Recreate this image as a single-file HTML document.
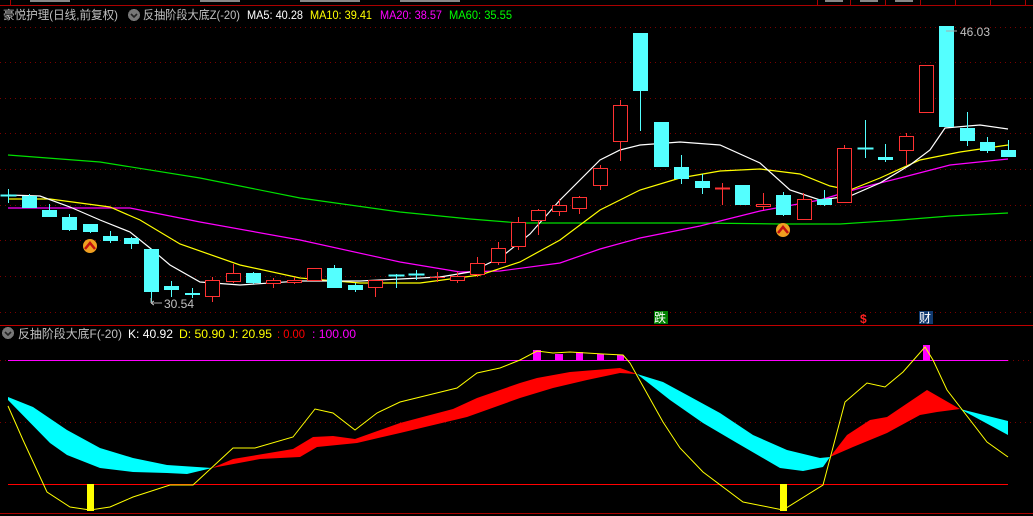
<!DOCTYPE html>
<html><head><meta charset="utf-8"><style>
html,body{margin:0;padding:0;background:#000;width:1033px;height:516px;overflow:hidden}
svg{display:block}
text{font-family:"Liberation Sans","Noto Sans CJK SC",sans-serif;font-size:12px}
</style></head><body>
<svg width="1033" height="516" viewBox="0 0 1033 516" xmlns="http://www.w3.org/2000/svg" shape-rendering="crispEdges">
<rect width="1033" height="516" fill="#000"/>
<!-- top strip -->
<line x1="0" y1="5.5" x2="1033" y2="5.5" stroke="#a00" />
<g stroke="#a00"><line x1="10.5" y1="0" x2="10.5" y2="5"/><line x1="817.5" y1="0" x2="817.5" y2="5"/><line x1="850.5" y1="0" x2="850.5" y2="5"/><line x1="885.5" y1="0" x2="885.5" y2="5"/><line x1="920.5" y1="0" x2="920.5" y2="5"/><line x1="955.5" y1="0" x2="955.5" y2="5"/><line x1="990.5" y1="0" x2="990.5" y2="5"/><line x1="1025.5" y1="0" x2="1025.5" y2="5"/></g>
<g fill="#888"><rect x="30" y="0" width="40" height="2"/><rect x="200" y="0" width="40" height="2"/><rect x="300" y="0" width="60" height="2"/><rect x="400" y="0" width="60" height="2"/><rect x="825" y="0" width="18" height="2"/><rect x="860" y="0" width="18" height="2"/><rect x="895" y="0" width="18" height="2"/></g>
<!-- grid -->
<g stroke="#7a0000" stroke-dasharray="1,4">
<line x1="0" y1="27.5" x2="1033" y2="27.5"/><line x1="0" y1="62.5" x2="1033" y2="62.5"/><line x1="0" y1="98.5" x2="1033" y2="98.5"/><line x1="0" y1="133.5" x2="1033" y2="133.5"/><line x1="0" y1="169.5" x2="1033" y2="169.5"/><line x1="0" y1="205.5" x2="1033" y2="205.5"/><line x1="0" y1="240.5" x2="1033" y2="240.5"/><line x1="0" y1="276.5" x2="1033" y2="276.5"/><line x1="0" y1="312.5" x2="1033" y2="312.5"/>
<line x1="0" y1="422.5" x2="1033" y2="422.5"/><line x1="0" y1="360.5" x2="8" y2="360.5"/>
</g>
<line x1="0" y1="325.5" x2="1033" y2="325.5" stroke="#c00000"/>
<line x1="0" y1="513.5" x2="1033" y2="513.5" stroke="#a00"/>
<!-- header text -->
<text x="3" y="19" fill="#c0c0c0" textLength="115" lengthAdjust="spacingAndGlyphs">豪悦护理(日线,前复权)</text>
<circle cx="134" cy="15" r="6" fill="#777"/><path d="M131 14 L134 17 L137 14" stroke="#222" stroke-width="1.6" fill="none" shape-rendering="auto"/>
<text x="143" y="19" fill="#c0c0c0" textLength="97" lengthAdjust="spacingAndGlyphs">反抽阶段大底Z(-20)</text>
<text x="247" y="19" fill="#fff" textLength="56" lengthAdjust="spacingAndGlyphs">MA5: 40.28</text>
<text x="310" y="19" fill="#ff0" textLength="62" lengthAdjust="spacingAndGlyphs">MA10: 39.41</text>
<text x="380" y="19" fill="#f0f" textLength="62" lengthAdjust="spacingAndGlyphs">MA20: 38.57</text>
<text x="449" y="19" fill="#0f0" textLength="63" lengthAdjust="spacingAndGlyphs">MA60: 35.55</text>
<!-- MAs -->
<g fill="none" shape-rendering="auto" stroke-width="1.2">
<polyline stroke="#00e000" points="8,155 100,162 200,178 300,198 400,212 470,219 520,223 600,223 700,223 780,224 840,224 900,220 950,216 1008,213"/>
<polyline stroke="#f0f" points="8,208 130,208 200,222 300,240 400,262 460,272 500,271 560,263 600,249 640,238 700,226 760,211 820,200 860,188 900,178 950,165 1008,159"/>
<polyline stroke="#ff0" points="8,199 50,199 110,207 140,220 180,244 240,265 300,278 360,283 420,283 480,275 520,262 560,240 600,210 640,190 680,178 720,171 760,169 800,174 830,186 850,190 880,178 920,160 960,152 1008,145"/>
<polyline stroke="#fff" points="8,195 40,196 70,207 100,220 130,232 150,248 170,265 200,282 240,285 300,281 360,281 400,279 440,277 470,272 500,258 530,234 560,200 600,160 620,150 640,145 680,142 720,145 760,163 790,190 820,200 850,196 880,183 910,165 930,150 945,128 980,125 1008,129"/>
</g>
<!-- cyan candles -->
<g stroke="#54ffff" fill="#54ffff">
<line x1="8.5" y1="189" x2="8.5" y2="203"/><rect x="1" y="195" width="15" height="1"/>
<line x1="29.5" y1="194" x2="29.5" y2="208"/><rect x="22.5" y="196.5" width="14" height="11"/>
<line x1="49.5" y1="204" x2="49.5" y2="217"/><rect x="42.5" y="210.5" width="14" height="6"/>
<line x1="69.5" y1="214" x2="69.5" y2="231"/><rect x="62.5" y="217.5" width="14" height="12"/>
<line x1="90.5" y1="224" x2="90.5" y2="233"/><rect x="83.5" y="224.5" width="14" height="7"/>
<line x1="110.5" y1="231" x2="110.5" y2="243"/><rect x="103.5" y="236.5" width="14" height="4"/>
<line x1="131.5" y1="237" x2="131.5" y2="249"/><rect x="124.5" y="238.5" width="14" height="5"/>
<line x1="151.5" y1="249" x2="151.5" y2="303"/><rect x="144.5" y="249.5" width="14" height="42"/>
<line x1="171.5" y1="281" x2="171.5" y2="297"/><rect x="164.5" y="286.5" width="14" height="3"/>
<line x1="192.5" y1="288" x2="192.5" y2="298"/><rect x="185.5" y="293.5" width="14" height="1"/>
<line x1="253.5" y1="272" x2="253.5" y2="284"/><rect x="246.5" y="273.5" width="14" height="9"/>
<line x1="334.5" y1="265" x2="334.5" y2="288"/><rect x="327.5" y="268.5" width="14" height="19"/>
<line x1="355.5" y1="283" x2="355.5" y2="292"/><rect x="348.5" y="285.5" width="14" height="4"/>
<line x1="396.5" y1="274" x2="396.5" y2="288"/><rect x="389" y="275" width="15" height="1"/>
<line x1="416.5" y1="270" x2="416.5" y2="280"/><rect x="409" y="274" width="15" height="1"/>
<line x1="640.5" y1="33" x2="640.5" y2="131"/><rect x="633.5" y="33.5" width="14" height="57"/>
<rect x="654.5" y="122.5" width="14" height="44"/>
<line x1="681.5" y1="155" x2="681.5" y2="184"/><rect x="674.5" y="167.5" width="14" height="11"/>
<line x1="702.5" y1="174" x2="702.5" y2="194"/><rect x="695.5" y="181.5" width="14" height="6"/>
<rect x="735.5" y="185.5" width="14" height="19"/>
<line x1="783.5" y1="192" x2="783.5" y2="216"/><rect x="776.5" y="195.5" width="14" height="19"/>
<line x1="824.5" y1="190" x2="824.5" y2="206"/><rect x="817.5" y="199.5" width="14" height="5"/>
<line x1="865.5" y1="120" x2="865.5" y2="158"/><rect x="858" y="148" width="15" height="1"/>
<line x1="885.5" y1="144" x2="885.5" y2="162"/><rect x="878.5" y="157.5" width="14" height="2"/>
<rect x="939.5" y="26.5" width="14" height="100"/>
<line x1="967.5" y1="112" x2="967.5" y2="146"/><rect x="960.5" y="128.5" width="14" height="12"/>
<line x1="987.5" y1="137" x2="987.5" y2="153"/><rect x="980.5" y="142.5" width="14" height="8"/>
<line x1="1008.5" y1="140" x2="1008.5" y2="157"/><rect x="1001.5" y="150.5" width="14" height="6"/>
</g>
<!-- red candles -->
<g stroke="#ff3232" fill="#000">
<line x1="212.5" y1="277" x2="212.5" y2="302"/><rect x="205.5" y="280.5" width="14" height="16"/>
<line x1="233.5" y1="264" x2="233.5" y2="283"/><rect x="226.5" y="273.5" width="14" height="8"/>
<line x1="273.5" y1="278" x2="273.5" y2="288"/><rect x="266.5" y="280.5" width="14" height="3"/>
<line x1="294.5" y1="277" x2="294.5" y2="284"/><rect x="287.5" y="280.5" width="14" height="2"/>
<rect x="307.5" y="268.5" width="14" height="12"/>
<line x1="375.5" y1="280" x2="375.5" y2="297"/><rect x="368.5" y="280.5" width="14" height="7"/>
<line x1="437.5" y1="272" x2="437.5" y2="282"/><line x1="430" y1="277.5" x2="445" y2="277.5"/>
<line x1="457.5" y1="272" x2="457.5" y2="283"/><rect x="450.5" y="276.5" width="14" height="4"/>
<line x1="477.5" y1="257" x2="477.5" y2="277"/><rect x="470.5" y="263.5" width="14" height="11"/>
<line x1="498.5" y1="242" x2="498.5" y2="265"/><rect x="491.5" y="248.5" width="14" height="14"/>
<line x1="518.5" y1="217" x2="518.5" y2="250"/><rect x="511.5" y="222.5" width="14" height="24"/>
<line x1="538.5" y1="209" x2="538.5" y2="235"/><rect x="531.5" y="210.5" width="14" height="10"/>
<line x1="559.5" y1="199" x2="559.5" y2="216"/><rect x="552.5" y="205.5" width="14" height="6"/>
<line x1="579.5" y1="196" x2="579.5" y2="214"/><rect x="572.5" y="197.5" width="14" height="11"/>
<line x1="600.5" y1="165" x2="600.5" y2="190"/><rect x="593.5" y="168.5" width="14" height="17"/>
<line x1="620.5" y1="100" x2="620.5" y2="161"/><rect x="613.5" y="105.5" width="14" height="36"/>
<line x1="722.5" y1="183" x2="722.5" y2="205"/><line x1="715" y1="188.5" x2="730" y2="188.5" stroke-width="2"/>
<line x1="763.5" y1="193" x2="763.5" y2="210"/><rect x="756.5" y="204.5" width="14" height="2"/>
<line x1="803.5" y1="193" x2="803.5" y2="220"/><rect x="797.5" y="199.5" width="14" height="20"/>
<line x1="844.5" y1="145" x2="844.5" y2="203"/><rect x="837.5" y="148.5" width="14" height="54"/>
<line x1="906.5" y1="133" x2="906.5" y2="165"/><rect x="899.5" y="136.5" width="14" height="14"/>
<rect x="919.5" y="65.5" width="14" height="47"/>
</g>
<!-- price labels -->
<g stroke="#aaa" fill="none"><path d="M151 303 L151 298 M151 303 H162 M151 303 l3 -2 M151 303 l3 2"/><path d="M946 31 H957"/></g>
<text x="164" y="308" fill="#c0c0c0">30.54</text>
<text x="960" y="36" fill="#c0c0c0">46.03</text>
<!-- orange markers -->
<g shape-rendering="auto">
<circle cx="90" cy="246" r="7" fill="#f0a020"/><path d="M85 249 L90 243 L95 249" stroke="#c01010" stroke-width="2.5" fill="none"/>
<circle cx="783" cy="230" r="7" fill="#f0a020"/><path d="M778 233 L783 227 L788 233" stroke="#c01010" stroke-width="2.5" fill="none"/>
</g>
<!-- markers row -->
<rect x="654" y="311" width="14" height="13" fill="#008000"/><text x="654" y="322" fill="#fff" font-size="12">跌</text>
<text x="860" y="323" fill="#ff2020" font-size="12" font-weight="bold">$</text>
<rect x="919" y="311" width="14" height="13" fill="#103a70"/><text x="919" y="322" fill="#fff" font-size="12">财</text>
<!-- lower header -->
<circle cx="8" cy="333" r="6" fill="#777"/><path d="M5 332 L8 335 L11 332" stroke="#222" stroke-width="1.6" fill="none" shape-rendering="auto"/>
<text x="18" y="338" fill="#c0c0c0" textLength="104" lengthAdjust="spacingAndGlyphs">反抽阶段大底F(-20)</text>
<text x="128" y="338" fill="#fff" textLength="45" lengthAdjust="spacingAndGlyphs">K: 40.92</text>
<text x="179" y="338" fill="#ff0" textLength="46" lengthAdjust="spacingAndGlyphs">D: 50.90</text>
<text x="229" y="338" fill="#ff0" textLength="43" lengthAdjust="spacingAndGlyphs">J: 20.95</text>
<text x="277" y="338" fill="#f00" textLength="28" lengthAdjust="spacingAndGlyphs">: 0.00</text>
<text x="312" y="338" fill="#f0f" textLength="44" lengthAdjust="spacingAndGlyphs">: 100.00</text>
<!-- lower panel -->
<line x1="8" y1="360.5" x2="1008" y2="360.5" stroke="#f0f"/>
<line x1="8" y1="484.5" x2="1008" y2="484.5" stroke="#f00"/>
<line x1="1008" y1="360.5" x2="1033" y2="360.5" stroke="#7a0000" stroke-dasharray="1,4"/>
<g shape-rendering="auto">
<polygon fill="#00ffff" points="8,397 33,407 67,430 100,448 133,458 167,465 212,468 187,474 167,473 133,472 100,468 67,455 50,443 8,400"/>
<polygon fill="#f00" points="212,468 233,459 293,449 313,437 333,436 355,439 400,423 453,409 477,398 520,383 537,378 570,372 620,368 637,374 620,373 587,380 553,388 520,398 467,417 400,433 357,443 317,447 300,457 260,459"/>
<polygon fill="#00ffff" points="637,374 663,382 687,395 720,413 753,435 787,450 820,458 830,457 823,467 803,471 780,468 737,443 703,423 670,400"/>
<polygon fill="#f00" points="830,457 847,435 870,420 887,417 927,390 960,409 937,412 920,415 887,433 853,447"/>
<polygon fill="#00ffff" points="960,409 1008,421 1008,435"/>
</g>
<g fill="#f0f"><rect x="533" y="350" width="8" height="10"/><rect x="555" y="354" width="8" height="6"/><rect x="576" y="352" width="7" height="8"/><rect x="597" y="354" width="7" height="6"/><rect x="617" y="355" width="7" height="5"/><rect x="923" y="345" width="7" height="15"/></g>
<g fill="#ff0"><rect x="87" y="484" width="7" height="27"/><rect x="780" y="484" width="7" height="27"/></g>
<polyline fill="none" stroke="#ff0" stroke-width="1" shape-rendering="auto" points="8,406 23,440 47,492 70,507 90,510 110,507 133,497 170,485 193,485 233,448 255,448 293,437 315,409 333,413 355,430 377,413 400,402 457,388 477,373 500,368 520,360 537,351 553,353 570,352 603,354 623,355 630,363 663,422 680,448 703,472 743,502 783,510 823,485 845,402 867,383 885,387 903,372 925,347 933,360 947,390 987,442 1008,457"/>
</svg>
</body></html>
